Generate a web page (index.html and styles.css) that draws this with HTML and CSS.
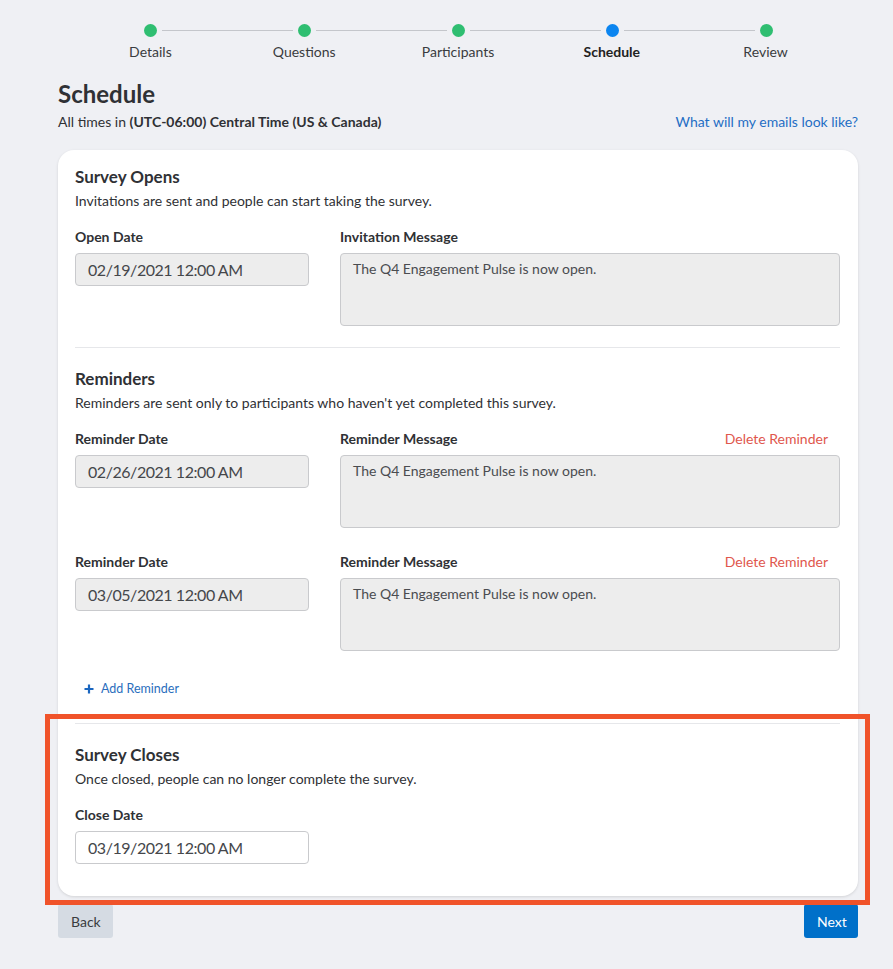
FILE: index.html
```html
<!DOCTYPE html>
<html lang="en">
<head>
<meta charset="utf-8">
<title>Schedule</title>
<link rel="stylesheet" href="styles.css">
</head>
<body>
<div class="page">
  <nav class="stepper">
    <div class="track">
      <span class="dot done"></span><span class="line"></span>
      <span class="dot done"></span><span class="line"></span>
      <span class="dot done"></span><span class="line"></span>
      <span class="dot current"></span><span class="line"></span>
      <span class="dot done"></span>
    </div>
    <div class="labels">
      <span>Details</span>
      <span>Questions</span>
      <span>Participants</span>
      <span class="active">Schedule</span>
      <span>Review</span>
    </div>
  </nav>

  <h1 class="title">Schedule</h1>
  <div class="subhead">
    <p class="tz">All times in <b>(UTC-06:00) Central Time (US &amp; Canada)</b></p>
    <a class="link" href="#">What will my emails look like?</a>
  </div>

  <div class="card-wrap">
    <div class="card">
      <section class="section">
        <h2>Survey Opens</h2>
        <p class="desc">Invitations are sent and people can start taking the survey.</p>
        <div class="row">
          <div class="field">
            <div class="label">Open Date</div>
            <div class="input disabled">02/19/2021 12:00 AM</div>
          </div>
          <div class="field">
            <div class="label-row"><span class="label">Invitation Message</span></div>
            <div class="textarea">The Q4 Engagement Pulse is now open.</div>
          </div>
        </div>
      </section>

      <section class="section">
        <h2>Reminders</h2>
        <p class="desc">Reminders are sent only to participants who haven't yet completed this survey.</p>
        <div class="row">
          <div class="field">
            <div class="label">Reminder Date</div>
            <div class="input disabled">02/26/2021 12:00 AM</div>
          </div>
          <div class="field">
            <div class="label-row"><span class="label">Reminder Message</span><a class="delete" href="#">Delete Reminder</a></div>
            <div class="textarea">The Q4 Engagement Pulse is now open.</div>
          </div>
        </div>
        <div class="row second">
          <div class="field">
            <div class="label">Reminder Date</div>
            <div class="input disabled">03/05/2021 12:00 AM</div>
          </div>
          <div class="field">
            <div class="label-row"><span class="label">Reminder Message</span><a class="delete" href="#">Delete Reminder</a></div>
            <div class="textarea">The Q4 Engagement Pulse is now open.</div>
          </div>
        </div>
        <a class="add" href="#"><svg class="plus" viewBox="0 0 10 10" width="10" height="10"><path d="M5 0.5v9M0.5 5h9" stroke="currentColor" stroke-width="2.2" fill="none"/></svg>Add Reminder</a>
      </section>

      <section class="section last">
        <h2>Survey Closes</h2>
        <p class="desc">Once closed, people can no longer complete the survey.</p>
        <div class="field narrow">
          <div class="label">Close Date</div>
          <div class="input">03/19/2021 12:00 AM</div>
        </div>
      </section>
    </div>
    <div class="highlight"></div>
  </div>

  <div class="actions">
    <button class="btn back">Back</button>
    <button class="btn next">Next</button>
  </div>
</div>
</body>
</html>
```

FILE: styles.css
```css
* { box-sizing: border-box; }
html, body { margin: 0; padding: 0; }
body {
  background: #eff0f4;
  font-family: Lato, "Open Sans", Arial, sans-serif;
  color: #2f3135;
  width: 893px;
  height: 969px;
  overflow: hidden;
}
.page {
  width: 800px;
  margin-left: 58px;
  padding-top: 24px;
}

/* stepper */
.stepper { width: 769px; margin: 0 auto; }
.track {
  display: flex;
  align-items: center;
  padding: 0 70px;
  height: 13px;
}
.dot {
  width: 13px; height: 13px; border-radius: 50%;
  background: #2fbe71;
  flex: none;
}
.dot.current { background: #0b85f0; }
.line {
  flex: 1;
  height: 1px;
  background: #c4c6cb;
  margin: 0 5px;
}
.labels {
  display: grid;
  grid-template-columns: repeat(5, 1fr);
  text-align: center;
  font-size: 14px;
  line-height: 18px;
  margin-top: 6px;
  color: #3a3c40;
}
.labels .active { font-weight: 700; color: #222; }

.title {
  font-size: 24px;
  line-height: 28px;
  font-weight: 700;
  margin: 19px 0 0;
  color: #2f3135;
}
.subhead {
  display: flex;
  justify-content: space-between;
  align-items: center;
  margin-top: 3px;
  height: 20px;
}
.tz { margin: 0; font-size: 14px; color: #2f3135; }
.tz b { font-weight: 700; }
.link {
  font-size: 14px;
  color: #1f6ec4;
  text-decoration: none;
}

/* card */
.card-wrap { position: relative; margin-top: 19px; }
.card {
  background: #fff;
  border-radius: 16px;
  box-shadow: 0 1px 3px rgba(0,0,0,0.12);
  padding: 0 18px 0 17px;
}
.section {
  padding: 17px 0 21px;
  border-bottom: 1px solid #e6e7ea;
}
.section + .section { padding-top: 21px; }
.section:nth-child(2) { padding-bottom: 25px; }
.section.last { border-bottom: none; padding-top: 21px; padding-bottom: 32px; }
h2 {
  margin: 0;
  font-size: 17px;
  line-height: 20px;
  font-weight: 700;
  color: #2f3135;
}
.desc {
  margin: 5px 0 0;
  font-size: 14px;
  line-height: 18px;
  color: #2f3135;
}
.row {
  display: grid;
  grid-template-columns: 234px 1fr;
  column-gap: 31px;
  margin-top: 18px;
}
.row.second { margin-top: 25px; }
.field.narrow { width: 234px; margin-top: 18px; }
.label {
  font-size: 14px;
  line-height: 18px;
  font-weight: 700;
  color: #2f3135;
}
.label-row {
  display: flex;
  justify-content: space-between;
  padding-right: 12px;
}
.delete {
  font-size: 14px;
  line-height: 18px;
  color: #e0574d;
  text-decoration: none;
}
.input {
  margin-top: 7px;
  height: 33px;
  border: 1px solid #c9cacd;
  border-radius: 4px;
  padding: 0 12px;
  font-size: 16px;
  letter-spacing: -0.45px;
  line-height: 31px;
  color: #45474b;
  background: #fff;
}
.input.disabled { background: #ededed; }
.textarea {
  margin-top: 7px;
  height: 73px;
  border: 1px solid #c9cacd;
  border-radius: 4px;
  background: #ededed;
  padding: 6px 12px;
  font-size: 14px;
  line-height: 18px;
  color: #4a4c50;
}
.add {
  display: flex;
  align-items: center;
  gap: 7px;
  margin: 29px 0 0 9px;
  font-size: 12.5px;
  line-height: 18px;
  color: #2a6ebd;
  text-decoration: none;
}
.plus { color: #1a66c0; }

.highlight {
  position: absolute;
  left: -13px;
  right: -12px;
  top: 564px;
  height: 191px;
  border: 5px solid #f0532a;
  pointer-events: none;
}

/* actions */
.actions {
  display: flex;
  justify-content: space-between;
  margin-top: 8px;
}
.btn {
  height: 34px;
  border: none;
  border-radius: 3px;
  font-family: inherit;
  font-size: 14px;
  padding: 0 13px;
}
.btn.back { background: #d5dbe3; color: #3a3c40; width: 55px; }
.btn.next { background: #0070c9; color: #fff; width: 54px; }
```
